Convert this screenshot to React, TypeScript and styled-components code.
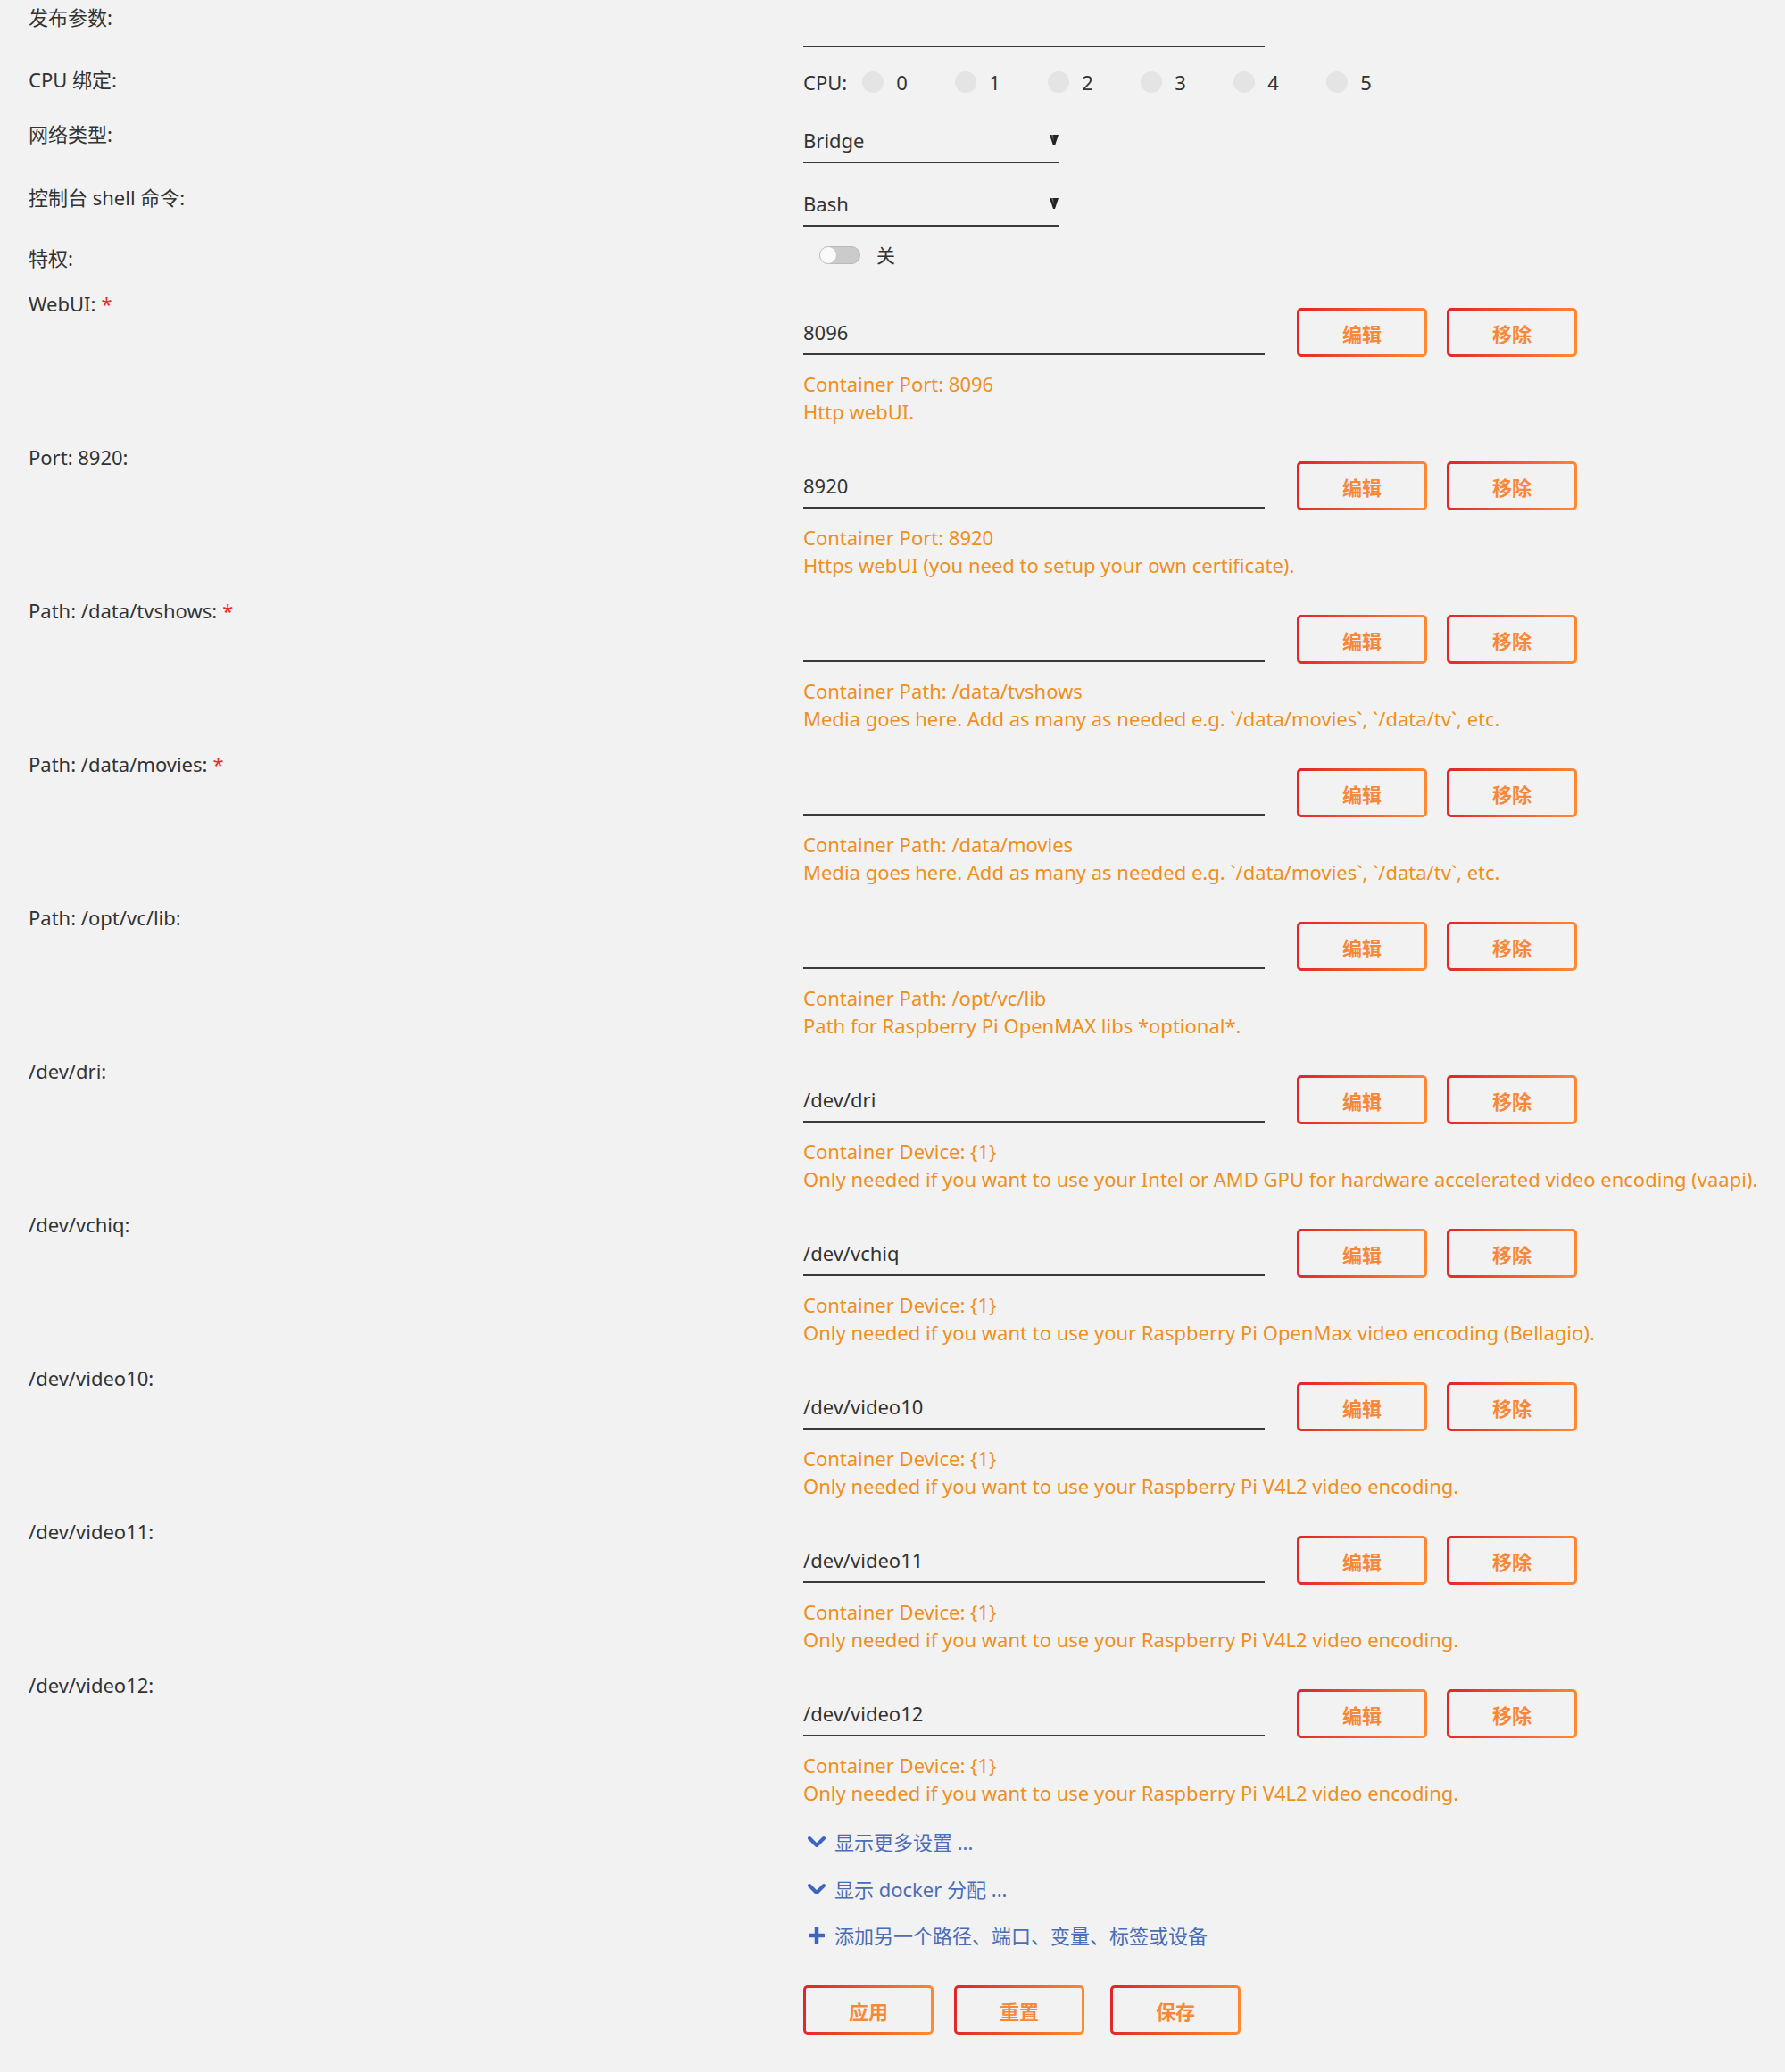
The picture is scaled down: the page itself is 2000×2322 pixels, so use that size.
import React from 'react';
import styled, { createGlobalStyle } from 'styled-components';

const GlobalStyle = createGlobalStyle`
  html, body { margin: 0; padding: 0; background: #f2f2f2; }
  body {
    font-family: "Noto Sans", "Noto Sans CJK SC", sans-serif;
    color: #333;
    font-size: 22px;
  }
  * { box-sizing: border-box; }
`;

const Page = styled.div`
  padding: 4px 0 45px 32px;
  display: flex;
  flex-direction: column;
`;

const Row = styled.div<{ $mt?: number }>`
  display: grid;
  grid-template-columns: 868px 1fr;
  margin-top: ${(p) => p.$mt ?? 0}px;
`;

const Label = styled.div`
  font-size: 22px;
  line-height: 30px;
  color: #333;
  white-space: nowrap;
`;

const Req = styled.span`
  color: #ee2a2a;
  margin-left: 6px;
`;

const Control = styled.div<{ $pt?: number }>`
  padding-top: ${(p) => p.$pt ?? 0}px;
  display: flex;
  flex-direction: column;
`;

const TextInput = styled.input<{ $compact?: boolean }>`
  width: 517px;
  border: none;
  border-bottom: 2px solid #3a3a3a;
  background: transparent;
  font: inherit;
  font-size: 22px;
  line-height: 30px;
  color: #333;
  padding: ${(p) => (p.$compact ? '8px 0 9px' : '12px 0 9px')};
  outline: none;
  border-radius: 0;
`;

const CpuLine = styled.div`
  height: 36px;
  display: flex;
  align-items: center;
  line-height: 30px;
`;

const CpuTitle = styled.span`
  margin-right: 17px;
`;

const CpuOption = styled.label`
  width: 104px;
  display: flex;
  align-items: center;
  gap: 14px;
`;

const RadioDot = styled.span`
  width: 24px;
  height: 24px;
  border-radius: 50%;
  background: #e4e4e4;
  display: inline-block;
`;

const SelectBox = styled.div`
  width: 286px;
  height: 48px;
  padding: 7px 0 9px;
  border-bottom: 2px solid #3a3a3a;
  display: flex;
  align-items: center;
  justify-content: space-between;
  line-height: 30px;
`;

const ToggleWrap = styled.div`
  padding-top: 2px;
  padding-left: 18px;
  display: flex;
  align-items: center;
  gap: 18px;
  height: 22px;
`;

const Track = styled.span`
  position: relative;
  width: 46px;
  height: 20px;
  border-radius: 10px;
  background: #cbcbcb;
  border: 1px solid #b9b9b9;
  display: inline-block;
`;

const Knob = styled.span`
  position: absolute;
  left: -1px;
  top: -1px;
  width: 20px;
  height: 20px;
  border-radius: 50%;
  background: #fafafa;
  border: 1px solid #c4c4c4;
`;

const ToggleText = styled.span`
  font-size: 21px;
  line-height: 22px;
`;

const InputLine = styled.div`
  display: flex;
  align-items: flex-start;
`;

const GradButton = styled.button<{ $ml?: number }>`
  width: 146px;
  height: 55px;
  margin-left: ${(p) => p.$ml ?? 0}px;
  border: 3px solid transparent;
  border-radius: 5px;
  background: linear-gradient(#f2f2f2, #f2f2f2) padding-box,
    linear-gradient(100deg, #e02229 0%, #f2582e 50%, #ff8d33 100%) border-box;
  color: #f7883a;
  font-family: "Noto Sans CJK SC", "Noto Sans", sans-serif;
  font-weight: 700;
  font-size: 22px;
  line-height: 1;
  padding: 0;
  cursor: pointer;
`;

const Desc = styled.div`
  margin-top: 15px;
  color: #ef8f1c;
  font-size: 22px;
  line-height: 31px;
  white-space: nowrap;
`;

const Actions = styled.div`
  margin-left: 868px;
  display: flex;
  flex-direction: column;
`;

const LinkRow = styled.div<{ $mt: number }>`
  margin-top: ${(p) => p.$mt}px;
  display: flex;
  align-items: center;
  gap: 10px;
  line-height: 30px;
  color: #4a6db6;
  padding-left: 4px;
  font-size: 22px;
`;

const IconBox = styled.span`
  width: 21px;
  height: 30px;
  display: inline-flex;
  align-items: center;
  justify-content: center;
`;

const ButtonBar = styled.div`
  margin-top: 41px;
  display: flex;
  gap: 23px;
`;

type Entry = {
  label: string;
  req?: boolean;
  value: string;
  l1: string;
  l2: string;
};

const media = 'Media goes here. Add as many as needed e.g. `/data/movies`, `/data/tv`, etc.';
const v4l2 = 'Only needed if you want to use your Raspberry Pi V4L2 video encoding.';

const entries: Entry[] = [
  { label: 'WebUI:', req: true, value: '8096', l1: 'Container Port: 8096', l2: 'Http webUI.' },
  { label: 'Port: 8920:', value: '8920', l1: 'Container Port: 8920', l2: 'Https webUI (you need to setup your own certificate).' },
  { label: 'Path: /data/tvshows:', req: true, value: '', l1: 'Container Path: /data/tvshows', l2: media },
  { label: 'Path: /data/movies:', req: true, value: '', l1: 'Container Path: /data/movies', l2: media },
  { label: 'Path: /opt/vc/lib:', value: '', l1: 'Container Path: /opt/vc/lib', l2: 'Path for Raspberry Pi OpenMAX libs *optional*.' },
  { label: '/dev/dri:', value: '/dev/dri', l1: 'Container Device: {1}', l2: 'Only needed if you want to use your Intel or AMD GPU for hardware accelerated video encoding (vaapi).' },
  { label: '/dev/vchiq:', value: '/dev/vchiq', l1: 'Container Device: {1}', l2: 'Only needed if you want to use your Raspberry Pi OpenMax video encoding (Bellagio).' },
  { label: '/dev/video10:', value: '/dev/video10', l1: 'Container Device: {1}', l2: v4l2 },
  { label: '/dev/video11:', value: '/dev/video11', l1: 'Container Device: {1}', l2: v4l2 },
  { label: '/dev/video12:', value: '/dev/video12', l1: 'Container Device: {1}', l2: v4l2 },
];

const Arrow = () => (
  <svg width="10" height="14" viewBox="0 0 10 14">
    <path d="M0 1 L10 1 L6 13 L4 13 Z" fill="#222" />
    <path d="M2 1 L4 1 L5 9 Z" fill="#666" />
  </svg>
);

const Chevron = () => (
  <svg width="20" height="14" viewBox="0 0 20 14">
    <path d="M2 3 L10 11 L18 3" fill="none" stroke="#3d65bd" strokeWidth="4" strokeLinecap="round" strokeLinejoin="round" />
  </svg>
);

const Plus = () => (
  <svg width="18" height="18" viewBox="0 0 18 18">
    <path d="M9 1 V17 M1 9 H17" stroke="#3d65bd" strokeWidth="4.5" strokeLinecap="round" />
  </svg>
);

export default function App() {
  return (
    <>
      <GlobalStyle />
      <Page>
        <Row>
          <Label>发布参数:</Label>
          <Control>
            <TextInput $compact defaultValue="" />
          </Control>
        </Row>

        <Row $mt={21}>
          <Label>CPU 绑定:</Label>
          <Control>
            <CpuLine>
              <CpuTitle>CPU:</CpuTitle>
              {[0, 1, 2, 3, 4, 5].map((n) => (
                <CpuOption key={n}>
                  <RadioDot />
                  <span>{n}</span>
                </CpuOption>
              ))}
            </CpuLine>
          </Control>
        </Row>

        <Row $mt={25}>
          <Label>网络类型:</Label>
          <Control>
            <SelectBox>
              <span>Bridge</span>
              <Arrow />
            </SelectBox>
          </Control>
        </Row>

        <Row $mt={23}>
          <Label>控制台 shell 命令:</Label>
          <Control>
            <SelectBox>
              <span>Bash</span>
              <Arrow />
            </SelectBox>
          </Control>
        </Row>

        <Row $mt={20}>
          <Label>特权:</Label>
          <Control>
            <ToggleWrap>
              <Track>
                <Knob />
              </Track>
              <ToggleText>关</ToggleText>
            </ToggleWrap>
          </Control>
        </Row>

        {entries.map((e, i) => (
          <Row key={e.label} $mt={i === 0 ? 21 : 20}>
            <Label>
              {e.label}
              {e.req && <Req>*</Req>}
            </Label>
            <Control $pt={20}>
              <InputLine>
                <TextInput defaultValue={e.value} />
                <GradButton $ml={36}>编辑</GradButton>
                <GradButton $ml={22}>移除</GradButton>
              </InputLine>
              <Desc>
                {e.l1}
                <br />
                {e.l2}
              </Desc>
            </Control>
          </Row>
        ))}

        <Actions>
          <LinkRow $mt={24}>
            <IconBox>
              <Chevron />
            </IconBox>
            <span>显示更多设置 ...</span>
          </LinkRow>
          <LinkRow $mt={23}>
            <IconBox>
              <Chevron />
            </IconBox>
            <span>显示 docker 分配 ...</span>
          </LinkRow>
          <LinkRow $mt={22}>
            <IconBox>
              <Plus />
            </IconBox>
            <span>添加另一个路径、端口、变量、标签或设备</span>
          </LinkRow>
          <ButtonBar>
            <GradButton>应用</GradButton>
            <GradButton>重置</GradButton>
            <GradButton $ml={6}>保存</GradButton>
          </ButtonBar>
        </Actions>
      </Page>
    </>
  );
}
